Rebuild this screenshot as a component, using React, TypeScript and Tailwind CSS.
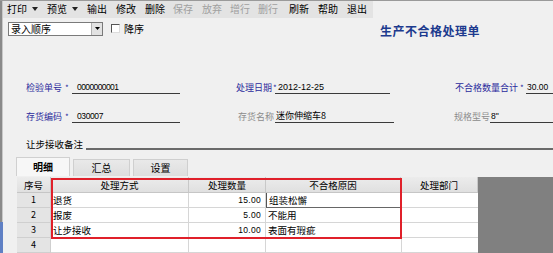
import React from 'react'

const cjk = "font-['Noto_Sans_CJK_SC',sans-serif]"
const num = "font-['Liberation_Sans',sans-serif]"

function Caret() {
  return (
    <svg width="6" height="4" viewBox="0 0 6 4" className="ml-[5px]">
      <path d="M0 0h6L3 4z" fill="#222" />
    </svg>
  )
}

const tools: { label: string; w: string; caret?: boolean; off?: boolean }[] = [
  { label: '打印', w: 'w-[40px]', caret: true },
  { label: '预览', w: 'w-[40px]', caret: true },
  { label: '输出', w: 'w-[29px]' },
  { label: '修改', w: 'w-[29px]' },
  { label: '删除', w: 'w-[28px]' },
  { label: '保存', w: 'w-[29px]', off: true },
  { label: '放弃', w: 'w-[28px]', off: true },
  { label: '增行', w: 'w-[28px]', off: true },
  { label: '删行', w: 'w-[31px]', off: true },
  { label: '刷新', w: 'w-[29px]' },
  { label: '帮助', w: 'w-[29px]' },
  { label: '退出', w: 'w-[25px]' },
]

const rows = [
  { no: '1', way: '退货', qty: '15.00', reason: '组装松懈' },
  { no: '2', way: '报废', qty: '5.00', reason: '不能用' },
  { no: '3', way: '让步接收', qty: '10.00', reason: '表面有瑕疵' },
  { no: '4', way: '', qty: '', reason: '' },
]

const label = 'shrink-0 min-w-0 whitespace-nowrap flex items-center text-[9px]'

export default function App() {
  return (
    <div className={`w-[553px] h-[253px] overflow-hidden bg-[#f0f0f0] flex border-t border-[#9a9a9a] text-[9.5px] leading-[12px] text-black ${cjk}`}>
      {/* window edge */}
      <div className="w-[3px] flex flex-col shrink-0">
        <div className="h-[221px] bg-[#8a8a8a] border-r border-[#c8c8c8]" />
        <div className="flex-1 bg-[#5f80c4]" />
      </div>

      <div className="flex-1 flex flex-col min-w-0">
        {/* toolbar */}
        <div className="h-[19px] w-[370px] bg-[#e3e3e3] flex items-center pl-[4px] text-[10px]">
          {tools.map(t => (
            <div key={t.label} className={`${t.w} flex items-center ${t.off ? 'text-[#a0a0a0]' : 'text-black'}`}>
              <span>{t.label}</span>
              {t.caret && <Caret />}
            </div>
          ))}
        </div>

        {/* order row + title */}
        <div className="flex items-center h-[16px] mt-[3px] pl-[5px]">
          <div className="w-[95px] h-[14px] bg-white border border-[#7a7a7a] flex items-center">
            <span className="flex-1 pl-[2px] text-[10px]">录入顺序</span>
            <div className="w-[11px] h-[12px] bg-[#e2e2e2] border-l border-[#b0b0b0] flex items-center justify-center">
              <svg width="5" height="3" viewBox="0 0 5 3">
                <path d="M0 0h5L2.5 3z" fill="#000" />
              </svg>
            </div>
          </div>
          <div className="ml-[8px] w-[9px] h-[9px] bg-white border-t border-l border-[#555] border-r border-b border-r-[#ddd] border-b-[#ddd]" />
          <span className="ml-[4px] text-[10px]">降序</span>
          <span className="ml-[236px] mt-[5px] text-[12px] font-bold text-[#1c3a8e] tracking-[0.5px]">生产不合格处理单</span>
        </div>

        {/* fields */}
        <div className="flex items-end h-[13px] mt-[44px] pl-[23px]">
          <div className={`${label} w-[46px] text-[#2b2b9c]`}>
            <span>检验单号</span>
            <span className="ml-[3px] text-[8px]">*</span>
          </div>
          <div className={`shrink-0 w-[108px] border-b border-[#3a3a3a] pl-[5px] text-[8.5px] tracking-[-0.6px] ${num}`}>0000000001</div>
          <div className="shrink-0 w-[56px]" />
          <div className={`${label} w-[39px] text-[#2b2b9c]`}>
            <span>处理日期</span>
            <span className="ml-[1px] text-[8px]">*</span>
          </div>
          <div className={`shrink-0 w-[115px] border-b border-[#3a3a3a] pl-[3px] text-[9px] ${num}`}>2012-12-25</div>
          <div className="shrink-0 w-[65px]" />
          <div className={`${label} w-[71px] text-[#2b2b9c]`}>
            <span>不合格数量合计</span>
            <span className="ml-[2px] text-[8px]">*</span>
          </div>
          <div className={`flex-1 border-b border-[#3a3a3a] pl-[1px] text-[8.5px] ${num}`}>30.00</div>
        </div>

        <div className="flex items-end h-[13px] mt-[16px] pl-[23px]">
          <div className={`${label} w-[46px] text-[#2b2b9c]`}>
            <span>存货编码</span>
            <span className="ml-[3px] text-[8px]">*</span>
          </div>
          <div className={`shrink-0 w-[108px] border-b border-[#3a3a3a] pl-[5px] text-[8.5px] tracking-[-0.4px] ${num}`}>030007</div>
          <div className="shrink-0 w-[58px]" />
          <div className={`${label} w-[37px] text-[#8c8c8c]`}>存货名称</div>
          <div className="shrink-0 w-[119px] border-b border-[#3a3a3a] pl-[1px] text-[9px] whitespace-nowrap">迷你伸缩车8</div>
          <div className="shrink-0 w-[60px]" />
          <div className={`${label} w-[36px] text-[#8c8c8c]`}>规格型号</div>
          <div className={`flex-1 border-b border-[#3a3a3a] pl-[1px] text-[8.5px] ${num}`}>8"</div>
        </div>

        <div className="flex items-end h-[14px] mt-[15px] pl-[23px]">
          <div className="shrink-0 w-[60px] whitespace-nowrap">让步接收备注</div>
          <div className="flex-1 border-b-2 border-[#6a6a6a]" />
        </div>

        {/* tabs */}
        <div className="flex items-end h-[19px] mt-[7px] pl-[13px] gap-[3px] text-[10px]">
          <div className="w-[54px] h-[19px] bg-[#f7f7f7] border border-b-0 border-[#d0d0d0] flex items-center justify-center font-bold">明细</div>
          <div className="w-[57px] h-[17px] bg-gradient-to-b from-[#e9e9e9] to-[#dedede] border border-b-0 border-[#cfcfcf] flex items-center justify-center">汇总</div>
          <div className="w-[55px] h-[17px] bg-gradient-to-b from-[#e9e9e9] to-[#dedede] border border-b-0 border-[#cfcfcf] flex items-center justify-center">设置</div>
        </div>

        {/* grid */}
        <div className="flex flex-1 pl-[14px] mt-[1px] text-[9.5px]">
          <div className="relative w-[461px]">
            <div className="grid grid-cols-[34px_138px_77px_135px_77px] h-[16px] bg-gradient-to-b from-[#ececec] to-[#e0e0e0] border-b border-[#c6c6c6]">
              {['序号', '处理方式', '处理数量', '不合格原因', '处理部门'].map(h => (
                <div key={h} className="border-r border-[#c8c8c8] flex items-center justify-center">{h}</div>
              ))}
            </div>
            {rows.map(r => (
              <div key={r.no} className="grid grid-cols-[34px_138px_77px_135px_77px] h-[15px]">
                <div className="bg-[#e4e4e4] border-r border-b border-[#cfcfcf] flex items-center justify-center text-[9px]">{r.no}</div>
                <div className="bg-white border-r border-b border-[#d6d6d6] flex items-center pl-[2px]">{r.way}</div>
                <div className={`bg-white border-r border-b border-[#d6d6d6] flex items-center justify-end pr-[4px] text-[8.5px] tracking-[0.3px] ${num}`}>{r.qty}</div>
                <div className={`bg-white flex items-center pl-[2px] border-b ${r.no === '1' ? 'border-l border-[#555] border-b-[#666]' : 'border-[#d6d6d6]'}`}>{r.reason}</div>
                <div className="bg-white border-l border-b border-[#d6d6d6]" />
              </div>
            ))}
            {/* annotation box */}
            <div className="absolute left-[34px] top-[1px] w-[351px] h-[61px] border-2 border-[#e0202a] pointer-events-none" />
          </div>
          <div className="flex-1 bg-[#808080]" />
        </div>
      </div>
    </div>
  )
}
